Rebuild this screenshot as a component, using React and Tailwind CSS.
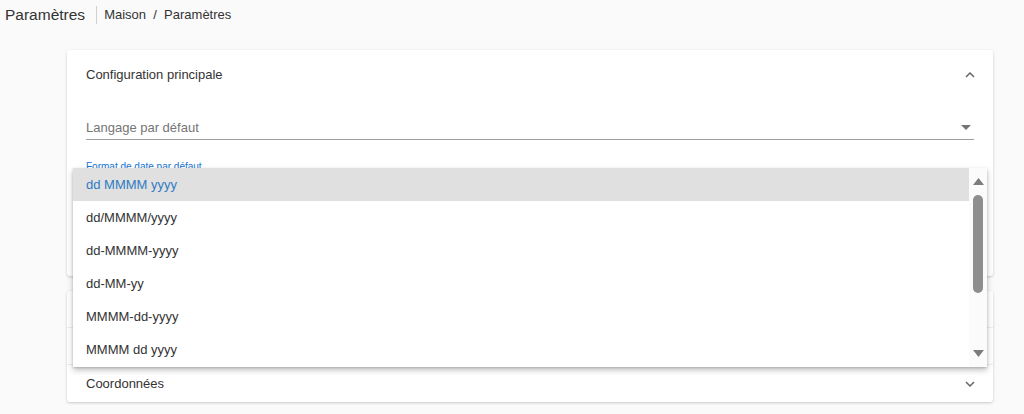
import React from 'react';

const formats = ['dd MMMM yyyy', 'dd/MMMM/yyyy', 'dd-MMMM-yyyy', 'dd-MM-yy', 'MMMM-dd-yyyy', 'MMMM dd yyyy'];

function Chevron({ up }) {
  return (
    <svg width="10" height="6" viewBox="0 0 10 6" className="text-[#666]">
      <path d={up ? 'M1 5 L5 1 L9 5' : 'M1 1 L5 5 L9 1'} fill="none" stroke="currentColor" strokeWidth="1.5" />
    </svg>
  );
}

function Panel({ title, last }) {
  return (
    <div className={`h-[37px] flex items-center justify-between pl-[19px] pr-[18px] ${last ? '' : 'border-b border-[#eeeeee]'}`}>
      <span className="text-[13px] text-[#333]">{title}</span>
      <Chevron />
    </div>
  );
}

export default function App() {
  return (
    <div className="relative min-h-[414px] bg-[#fafafa] font-['Liberation_Sans',Arial,sans-serif] text-[#333]">
      <div className="flex items-center h-[29px] pl-[5px]">
        <h1 className="text-[15.5px] leading-none text-[#333]">Paramètres</h1>
        <div className="w-px h-[18px] bg-[#d0d0d0] ml-[11px] mr-[7px]"></div>
        <div className="text-[13px] text-[#333]">Maison&nbsp; / &nbsp;Paramètres</div>
      </div>

      <div className="ml-[67px] w-[926px] mt-[21px] bg-white rounded-[3px] shadow-[0_1px_3px_rgba(0,0,0,0.2)] h-[226px]">
        <div className="h-[50px] flex items-center justify-between pl-[19px] pr-[18px]">
          <span className="text-[13px]">Configuration principale</span>
          <Chevron up />
        </div>
        <div className="px-[19px] pt-[18px]">
          <div className="flex items-center justify-between h-[19px] border-b border-[#9e9e9e] pb-[2px] box-content">
            <span className="text-[13px] text-[#757575]">Langage par défaut</span>
            <svg width="10" height="5" viewBox="0 0 10 5" className="mr-[3px]"><path d="M0 0 L10 0 L5 5 Z" fill="#757575" /></svg>
          </div>
          <div className="mt-[22px]">
            <div className="text-[10px] text-[#1976d2] leading-none">Format de date par défaut</div>
            <div className="flex items-center justify-between h-[22px] border-b border-[#9e9e9e]">
              <span className="text-[13px]">dd MMMM yyyy</span>
            </div>
          </div>
        </div>
      </div>

      <div className="ml-[67px] w-[926px] mt-[15px] bg-white rounded-[3px] shadow-[0_1px_3px_rgba(0,0,0,0.2)]">
        <Panel title="" />
        <Panel title="" />
        <Panel title="Coordonnées" last />
      </div>

      <div className="absolute left-[73px] top-[168px] w-[914px] h-[199px] bg-white shadow-[0_3px_6px_rgba(0,0,0,0.25),0_1px_2px_rgba(0,0,0,0.15)] flex">
        <div className="flex-1">
          {formats.map((f, i) => (
            <div
              key={f}
              className={`h-[33px] flex items-center pl-[13px] text-[13px] ${i === 0 ? 'bg-[#e0e0e0] text-[#2f7bc4]' : 'text-[#333]'}`}
            >
              {f}
            </div>
          ))}
        </div>
        <div className="w-[18px] bg-[#fbfbfb] flex flex-col items-center">
          <svg width="11" height="7" viewBox="0 0 11 7" className="mt-[10px]"><path d="M0 7 L5.5 0 L11 7 Z" fill="#7c7c7c" /></svg>
          <div className="w-[10px] h-[98px] mt-[10px] rounded-full bg-[#8e8e8e]"></div>
          <div className="flex-1"></div>
          <svg width="11" height="7" viewBox="0 0 11 7" className="mb-[10px]"><path d="M0 0 L11 0 L5.5 7 Z" fill="#7c7c7c" /></svg>
        </div>
      </div>
    </div>
  );
}
